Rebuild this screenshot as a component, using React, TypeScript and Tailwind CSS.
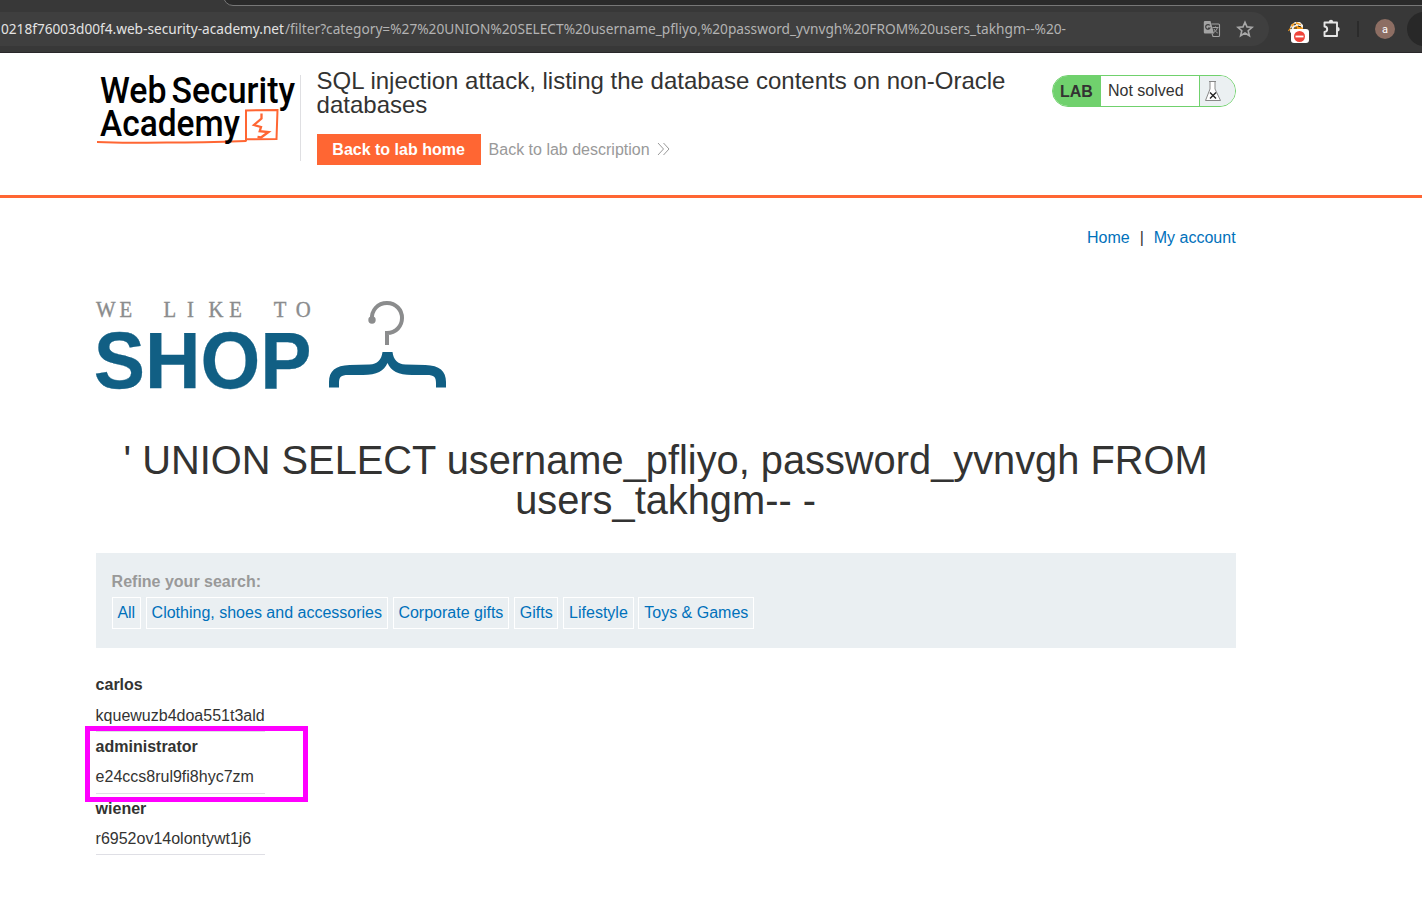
import React from 'react';

const categories = ['All', 'Clothing, shoes and accessories', 'Corporate gifts', 'Gifts', 'Lifestyle', 'Toys & Games'];

const users = [
  { name: 'carlos', password: 'kquewuzb4doa551t3ald' },
  { name: 'administrator', password: 'e24ccs8rul9fi8hyc7zm' },
  { name: 'wiener', password: 'r6952ov14olontywt1j6' },
];

function TranslateIcon() {
  return (
    <svg width="18" height="18" viewBox="0 0 18 18" fill="none" className="shrink-0">
      <path d="M2 1h5.500l3.500 12.500H2a1.200 1.200 0 0 1-1.200-1.200V2.200A1.200 1.200 0 0 1 2 1z" fill="#a3a3a3" />
      <path d="M8.500 4h7a1 1 0 0 1 1 1v10.500a1 1 0 0 1-1 1H10l-1-3" stroke="#a3a3a3" strokeWidth="1.100" />
      <path d="M6.800 5.400A2.300 2.300 0 1 0 7 8H5" stroke="#3f3f3f" strokeWidth="1.200" />
      <path d="M9.500 7.500h6M12.500 6.500v1M14.500 7.500c-.5 2-2 4-4 5.200M11 9c.7 1.500 2 3 3.700 4" stroke="#a3a3a3" strokeWidth="1" />
    </svg>
  );
}

function BugIcon() {
  return (
    <svg width="24" height="24" viewBox="0 0 24 24" className="shrink-0">
      <path d="M4 8l1-3 4-3 5 0 3 3v4h-3l-7 1-3 3z" fill="#f1eee8" />
      <path d="M5 5l3-2 1 1-3 3zM10 2l5 2v1l-5-1zM7 9l3-3h4l3 2v1H7z" fill="#f39a1e" />
      <path d="M3 9l3-1M8 5l2-1M12 6l3 1M8 8h3" stroke="#222" strokeWidth="1" />
      <path d="M2.500 11l2-3" stroke="#f39a1e" strokeWidth="1.200" />
      <rect x="5" y="9" width="18" height="14" rx="3" fill="#fff" />
      <circle cx="13.500" cy="16.500" r="5.500" fill="#f0443a" />
      <rect x="9.500" y="15.600" width="8" height="1.800" fill="#fff" />
    </svg>
  );
}

function BrowserBar() {
  return (
    <div className="relative h-[53px] overflow-hidden border-b border-[#29272a] bg-[#383838]">
      <div className="absolute -top-3 left-[223px] h-[18px] w-[1220px] rounded-bl-[10px] border border-[#777] bg-[#2a2a2a]" />
      <div className="flex h-full items-start pt-3">
        <div className="flex h-[34px] w-[1269px] shrink-0 items-center rounded-r-full bg-[#3f3f3f]">
          <svg width="1203" height="34" className="shrink-0" fontSize="14.500" fontFamily="'Noto Sans', 'Open Sans', sans-serif">
            <text x="1" y="22" fill="#e3e3e3" textLength="283" lengthAdjust="spacingAndGlyphs">0218f76003d00f4.web-security-academy.net</text>
            <text x="285" y="22" fill="#b3b3b3" textLength="781" lengthAdjust="spacingAndGlyphs">/filter?category=%27%20UNION%20SELECT%20username_pfliyo,%20password_yvnvgh%20FROM%20users_takhgm--%20-</text>
          </svg>
          <TranslateIcon />
          <svg className="ml-[15px] shrink-0" width="18" height="18" viewBox="0 0 18 18" fill="none" stroke="#a8a8a8" strokeWidth="1.600">
            <path d="M9 2.200l2 4.700 5.100.4-3.900 3.400 1.200 5L9 13l-4.400 2.700 1.200-5-3.900-3.400 5.100-.4z" />
          </svg>
        </div>
        <div className="ml-[17px] mt-2 shrink-0">
          <BugIcon />
        </div>
        <svg className="ml-3 mt-[6px] shrink-0" width="20" height="22" viewBox="0 0 20 22" fill="none" stroke="#e6e6e6" strokeWidth="1.900" strokeLinejoin="round">
          <path d="M2.500 4.500h12.500v13.500H2.500v-4c3.600-.3 3.600-5.200 0-5.500z" />
          <path d="M6.800 4a2.200 2.200 0 0 1 4.400 0zM15.500 9a2.200 2.200 0 0 1 0 4.400z" fill="#e6e6e6" stroke="none" />
        </svg>
        <div className="ml-[15px] mt-[9px] h-4 w-0.5 shrink-0 bg-[#2b2b2b]" />
        <div className="ml-4 mt-[7px] flex size-5 shrink-0 items-center justify-center rounded-full bg-[#8d6e63] font-['Roboto',sans-serif] text-[11px] leading-none text-white">a</div>
        <div className="ml-3 h-[34px] w-10 shrink-0 rounded-full bg-[#282828]" />
      </div>
    </div>
  );
}

function AcademyLogo() {
  return (
    <svg width="204" height="86" viewBox="0 0 204 86" className="shrink-0 overflow-visible">
      <g fontFamily="Roboto, sans-serif" fontWeight="500" fontSize="37.500" fill="#000">
        <text x="4" y="28.300" textLength="66.500" lengthAdjust="spacingAndGlyphs">Web</text>
        <text x="75.500" y="28.300" textLength="123.500" lengthAdjust="spacingAndGlyphs">Security</text>
      </g>
      <g fill="none" stroke="#ff6633">
        <path d="M1 67c30 1.500 45 .5 70 .5s55-.7 79-1.500" strokeWidth="2" />
        <path d="M150 66.500V35.500L181.500 35l-1 29-30.500.3" strokeWidth="2" />
        <path d="M165.500 38.500v5l-7.500 6.500 7 2-1.300 4.200 8.800.8-7.500 5.500-3.500-.5" strokeWidth="2.300" />
      </g>
      <text x="4" y="61" textLength="140" lengthAdjust="spacingAndGlyphs" fontFamily="Roboto, sans-serif" fontWeight="500" fontSize="37">Academy</text>
    </svg>
  );
}

function ShopLogo() {
  return (
    <svg width="352" height="92" viewBox="0 0 352 92" className="overflow-visible">
      <text transform="scale(0.9 1)" x="0 26 60 75 101 125 148 175 197.500 222" y="16.700" fill="#8b8c8d" stroke="#8b8c8d" strokeWidth="0.400" fontFamily="'Liberation Serif', serif" fontSize="23">WE LIKE TO</text>
      <text x="-2.300" y="87.500" textLength="217.800" lengthAdjust="spacingAndGlyphs" fontFamily="'Liberation Sans', sans-serif" fontWeight="700" fontSize="79" fill="#115f84" stroke="#115f84" strokeWidth="0.300">SHOP</text>
      <path d="M276 20C275 10 282 3 291 3c9 0 15 7 15 15s-6 15-15 15v12" fill="none" stroke="#8b8c8d" strokeWidth="4" />
      <circle cx="276" cy="20" r="3.700" fill="#8b8c8d" />
      <path d="M286.500 52h10c1 8 5 12 13 12.500l20 .5c14 .5 20.500 6 20.500 17v5.500h-10V83c0-6-2-8-9-8h-15c-14 0-21-4-24.500-12C288 71 281 75 267 75h-15c-7 0-9 2-9 8v4.500h-10V82c0-11 6.500-16.500 20.500-17l20-.5c8-.5 12-4.500 13-12.500z" fill="#115f84" />
    </svg>
  );
}

function LabStatus() {
  return (
    <div className="mt-[22px] flex h-8 w-[184px] shrink-0 overflow-hidden rounded-full border border-[#70d16d] bg-white leading-[30px]">
      <div className="w-[48px] bg-[#70d16d] pl-[7px] pt-px font-bold">LAB</div>
      <div className="w-[98px] pl-[7px]">Not solved</div>
      <div className="flex flex-1 items-center border-l border-[#70d16d] bg-[#ebf0f2] pl-1">
        <svg width="18" height="22" viewBox="0 0 18 22" fill="none" stroke="#888" strokeWidth="1">
          <path d="M5 1.500h7M6 2v7L1.500 20.500h15L11 9V2" fill="#fff" />
          <path d="M6 12.500l6 6M12 12.500l-6 6" stroke="#222" strokeWidth="1.400" />
        </svg>
      </div>
    </div>
  );
}

export default function App() {
  return (
    <div className="h-[924px] overflow-hidden bg-white font-['Liberation_Sans',Arial,sans-serif] text-base leading-6 text-[#333332]">
      <BrowserBar />
      <header className="h-[145px] border-b-[3px] border-[#ff6633]">
        <div className="ml-24 flex w-[1140px] items-start">
          <div className="mt-[22px] flex w-[205px] border-r border-[#dfdfe2]">
            <AcademyLogo />
          </div>
          <div className="ml-[15.6px] mt-4 w-[735.4px]">
            <h2 className="w-[710px] text-2xl leading-6">SQL injection attack, listing the database contents on non-Oracle databases</h2>
            <div className="mt-[17px] flex h-[31px] items-center">
              <a className="flex h-full w-[164px] items-center justify-center bg-[#ff6633] font-bold text-white">Back to lab home</a>
              <a className="ml-2 flex items-center text-[#999]">
                Back to lab description
                <svg className="ml-[7px] mb-px" width="14" height="14" viewBox="0 0 14 14" fill="none" stroke="#999" strokeWidth="1">
                  <path d="M1 1l5.500 6L1 13M6.500 1L12 7l-5.500 6" />
                </svg>
              </a>
            </div>
          </div>
          <div className="ml-px">
            <LabStatus />
          </div>
        </div>
      </header>
      <main className="ml-[95.6px] w-[1140px]">
        <nav className="flex h-[52px] justify-end gap-2.5 pt-7">
          <a className="text-[#0071bb]">Home</a>
          <span>|</span>
          <a className="text-[#0071bb]">My account</a>
        </nav>
        <div className="mt-[50px] h-[92px]">
          <ShopLogo />
        </div>
        <h1 className="mt-12 text-center text-[39.800px] leading-10">' UNION SELECT username_pfliyo, password_yvnvgh FROM users_takhgm-- -</h1>
        <section className="mt-[33px] h-[95px] bg-[#eaeff2] px-4 pt-[17px]">
          <div className="h-[27px] font-bold text-[#999]">Refine your search:</div>
          <div className="flex gap-[4.850px]">
            {categories.map((c) => (
              <a key={c} className="h-8 border border-white px-[4.800px] leading-[30px] whitespace-nowrap text-[#0071bb]">{c}</a>
            ))}
          </div>
        </section>
        <div className="relative mt-[22px] w-[169px]">
          {users.map((u) => (
            <div key={u.name} className="h-[61.800px] border-b border-[#dfdfe5]">
              <div className="h-[30.500px] leading-[30px] font-bold">{u.name}</div>
              <div className="leading-[30px]">{u.password}</div>
            </div>
          ))}
          <div className="absolute -left-[11px] top-[56px] h-[76px] w-[223px] border-[5px] border-[#ff00ff]" />
        </div>
      </main>
    </div>
  );
}
